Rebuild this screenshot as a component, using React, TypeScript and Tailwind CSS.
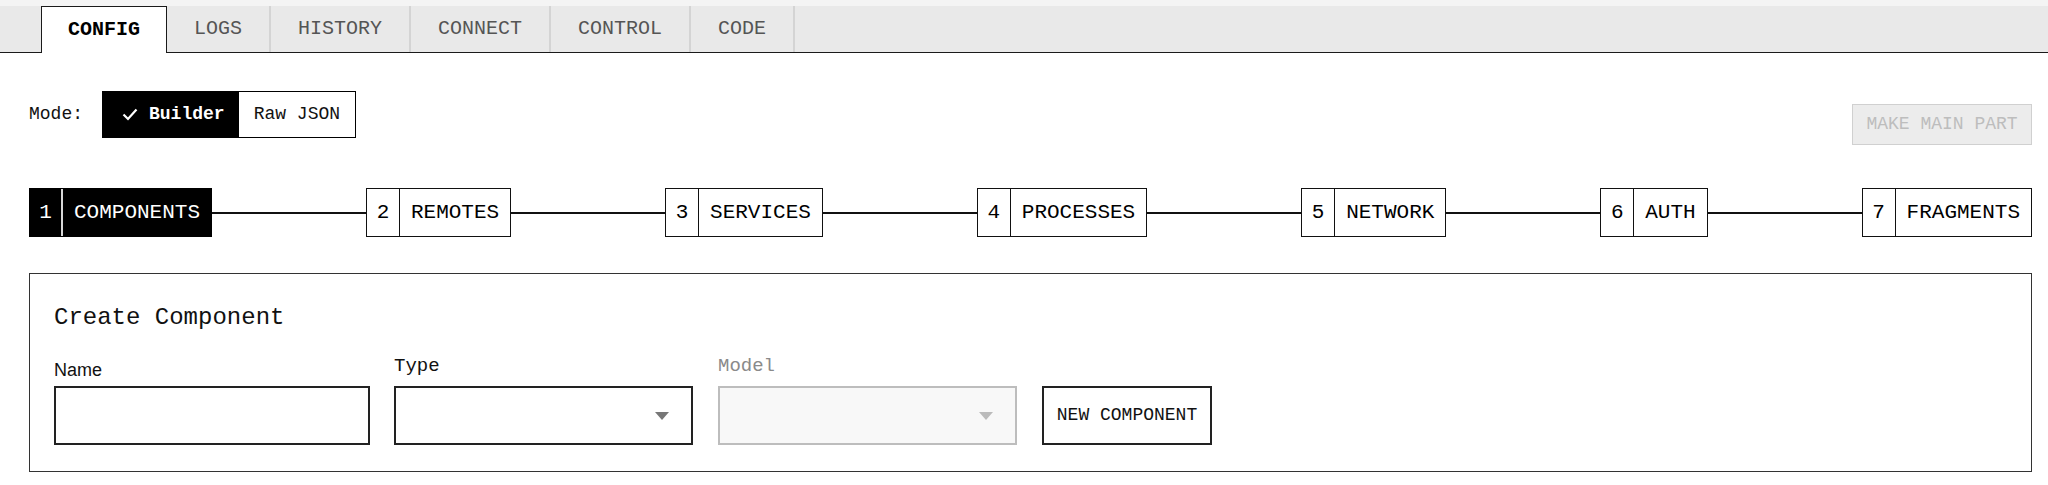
import React from "react";

const mono = { fontFamily: '"Liberation Mono", "DejaVu Sans Mono", monospace' };

const tabs = ["CONFIG", "LOGS", "HISTORY", "CONNECT", "CONTROL", "CODE"];
const steps = ["COMPONENTS", "REMOTES", "SERVICES", "PROCESSES", "NETWORK", "AUTH", "FRAGMENTS"];

function Caret({ color }: { color: string }) {
  return (
    <svg width="14" height="8" viewBox="0 0 14 8" className="shrink-0">
      <path d="M0 0 L14 0 L7 8 Z" fill={color} />
    </svg>
  );
}

export default function App() {
  return (
    <div className="w-[2048px] h-[485px] bg-white text-black overflow-hidden" style={mono}>
      {/* Tab bar */}
      <div className="bg-[#f4f4f4] pt-[6px]">
        <div className="flex bg-[#e9e9e9] border-b border-[#1a1a1a] pl-[41px] h-[47px]">
          {tabs.map((t, i) =>
            i === 0 ? (
              <div
                key={t}
                className="-mb-px h-[47px] flex items-center px-[26px] bg-white border border-b-0 border-[#1a1a1a] text-[20px] font-bold text-black"
              >
                {t}
              </div>
            ) : (
              <div
                key={t}
                className="h-[46px] flex items-center px-[27px] border-r-2 border-[#d4d4d4] text-[20px] text-[#555]"
              >
                {t}
              </div>
            )
          )}
        </div>
      </div>

      <div className="pl-[29px] pr-[16px]">
        {/* Mode row */}
        <div className="flex items-start justify-between mt-[38px]">
          <div className="flex items-center">
            <span className="text-[18px] text-[#111] mr-[19px]">Mode:</span>
            <div className="flex h-[47px] border border-black">
              <div className="flex items-center bg-black text-white pl-[19px] pr-[14px]">
                <svg width="16" height="13" viewBox="0 0 16 13" className="mr-[11px]">
                  <path d="M1.5 6.5 L6 11 L14.5 1.5" stroke="white" strokeWidth="2.2" fill="none" />
                </svg>
                <span className="text-[18px] font-bold">Builder</span>
              </div>
              <div className="flex items-center bg-white px-[15px] text-[18px] text-[#111]">Raw JSON</div>
            </div>
          </div>
          <div className="mt-[13px] h-[41px] w-[180px] flex items-center justify-center bg-[#ececec] border border-[#d0d0d0] text-[18px] text-[#bdbdbd]">
            MAKE MAIN PART
          </div>
        </div>

        {/* Stepper */}
        <div className="flex items-center mt-[43px]">
          {steps.map((s, i) => (
            <React.Fragment key={s}>
              {i > 0 && <div className="flex-1 h-[2px] bg-[#111]" />}
              <div
                className={
                  i === 0
                    ? "flex h-[49px] bg-black text-white border border-black"
                    : "flex h-[49px] bg-white text-black border border-[#111]"
                }
              >
                <div
                  className={
                    i === 0
                      ? "flex items-center justify-center w-[33px] border-r-2 border-[#d8d8d8] text-[21px]"
                      : "flex items-center justify-center w-[33px] border-r border-[#111] text-[21px]"
                  }
                >
                  {i + 1}
                </div>
                <div className="flex items-center px-[11px] text-[21px]">{s}</div>
              </div>
            </React.Fragment>
          ))}
        </div>

        {/* Card */}
        <div className="mt-[36px] border border-[#333] px-[24px] pt-[28px] pb-[26px]">
          <div className="text-[24px] leading-[32px] text-[#111]">Create Component</div>
          <div className="flex items-end gap-[24px] mt-[20px]">
            <div className="flex flex-col w-[316px]">
              <span
                className="text-[18px] leading-[24px] mb-[4px] text-[#111]"
                style={{ fontFamily: '"Liberation Sans", Arial, sans-serif' }}
              >
                Name
              </span>
              <div className="h-[59px] border-2 border-[#222] bg-white" />
            </div>
            <div className="flex flex-col w-[299px]">
              <span className="text-[19px] leading-[24px] mb-[8px] text-[#111]">Type</span>
              <div className="h-[59px] border-2 border-[#222] bg-white flex items-center justify-end pr-[22px]">
                <Caret color="#777" />
              </div>
            </div>
            <div className="flex flex-col w-[299px] ml-[1px]">
              <span className="text-[19px] leading-[24px] mb-[8px] text-[#8a8a8a]">Model</span>
              <div className="h-[59px] border-2 border-[#bdbdbd] bg-[#f8f8f8] flex items-center justify-end pr-[22px]">
                <Caret color="#bbbbbb" />
              </div>
            </div>
            <div className="ml-[1px] h-[59px] w-[170px] border-2 border-[#222] bg-white flex items-center justify-center text-[18px] text-[#111]">
              NEW COMPONENT
            </div>
          </div>
        </div>
      </div>
    </div>
  );
}
